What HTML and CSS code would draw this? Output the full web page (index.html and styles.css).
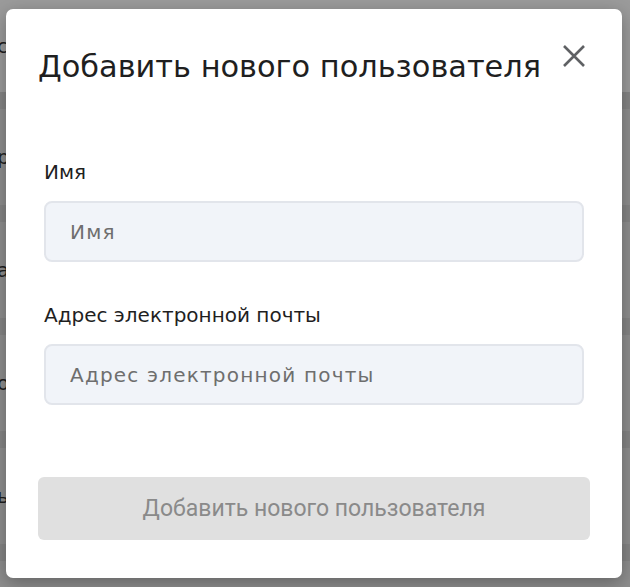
FILE: index.html
```html
<!DOCTYPE html>
<html lang="ru">
<head>
<meta charset="utf-8">
<link rel="stylesheet" href="styles.css">
</head>
<body>
<div class="page">
  <div class="row row-head"><span class="frag">с</span></div>
  <div class="band"></div>
  <div class="row"><span class="frag">р</span></div>
  <div class="band"></div>
  <div class="row"><span class="frag">а</span></div>
  <div class="band"></div>
  <div class="row"><span class="frag">о</span></div>
  <div class="band"></div>
  <div class="row"><span class="frag">ы</span></div>
  <div class="band"></div>
</div>
<div class="overlay">
  <div class="modal">
    <div class="modal-header">
      <h2 class="title">Добавить нового пользователя</h2>
      <button class="close" aria-label="Закрыть">
        <svg width="22" height="22" viewBox="0 0 22 22"><path d="M1 1 L21 21 M21 1 L1 21" stroke="#5f6164" stroke-width="2.6" fill="none"/></svg>
      </button>
    </div>
    <form class="form">
      <label class="field">
        <span class="label">Имя</span>
        <input class="input" type="text" placeholder="Имя">
      </label>
      <label class="field">
        <span class="label">Адрес электронной почты</span>
        <input class="input" type="email" placeholder="Адрес электронной почты">
      </label>
    </form>
    <button class="submit" disabled>Добавить нового пользователя</button>
  </div>
</div>
</body>
</html>
```
FILE: styles.css
```css
html, body {
  margin: 0;
  padding: 0;
  width: 630px;
  height: 587px;
  overflow: hidden;
  font-family: "DejaVu Sans", sans-serif;
}
.page {
  background: #8e8e8e;
  height: 587px;
  display: flex;
  flex-direction: column;
}
.row {
  height: 96px;
  flex: none;
  display: flex;
  align-items: center;
  font-size: 20px;
  color: #1e1e1e;
  white-space: nowrap;
}
.row-head {
  height: 92px;
  background: #9b9b9b;
}
.frag {
  margin-left: -3px;
}
.band {
  height: 17px;
  flex: none;
  background: #858585;
}
.overlay {
  position: absolute;
  inset: 0;
  display: flex;
  align-items: flex-start;
  padding-left: 6px;
}
.modal {
  margin-top: 9px;
  width: 616px;
  height: 569px;
  box-sizing: border-box;
  background: #fff;
  border-radius: 7px;
  padding: 38px 32px 38px 32px;
  box-shadow: 0 5px 18px rgba(0,0,0,0.3);
  display: flex;
  flex-direction: column;
}
.modal-header {
  display: flex;
  justify-content: space-between;
  align-items: flex-start;
}
.title {
  margin: 0;
  font-weight: 400;
  font-size: 30.4px;
  line-height: 40px;
  color: #1f1f1f;
  white-space: nowrap;
}
.close {
  border: 0;
  background: none;
  padding: 0;
  margin: -6px 1px 0 0;
  width: 30px;
  height: 30px;
  display: flex;
  align-items: center;
  justify-content: center;
}
.form {
  margin-top: 72px;
  padding: 0 6px;
  display: flex;
  flex-direction: column;
  gap: 16px;
}
.field {
  display: flex;
  flex-direction: column;
  gap: 16px;
}
.field + .field {
  margin-top: 24px;
}
.label {
  font-size: 20px;
  line-height: 26px;
  color: #1f1f1f;
}
.input {
  height: 61px;
  box-sizing: border-box;
  border: 2px solid #e2e5eb;
  background: #f1f4f9;
  border-radius: 8px;
  padding: 0 24px;
  font-family: "DejaVu Sans", sans-serif;
  font-size: 20px;
  letter-spacing: 1.2px;
  color: #1f1f1f;
  outline: none;
}
.input::placeholder {
  color: #6e6e6e;
}
.submit {
  margin-top: auto;
  height: 63px;
  border: 0;
  border-radius: 6px;
  background: #e0e0e0;
  color: #8a8a8a;
  font-family: Roboto, "Liberation Sans", sans-serif;
  font-size: 23px;
}
```
